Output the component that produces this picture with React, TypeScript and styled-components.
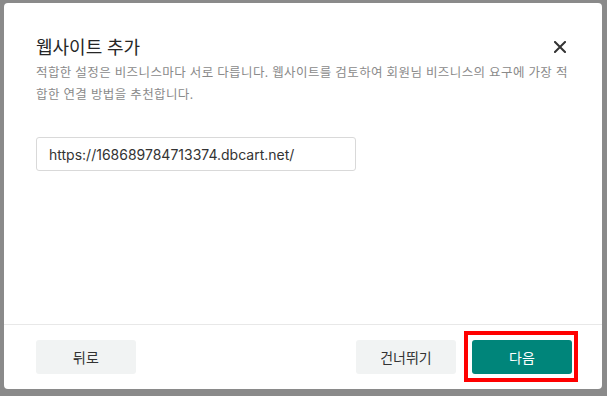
import React, { useState } from "react";
import styled, { createGlobalStyle } from "styled-components";

const GlobalStyle = createGlobalStyle`
  html, body {
    margin: 0;
    padding: 0;
    background: #8a8a8a;
  }
  body {
    font-family: "Noto Sans", "Noto Sans CJK KR", sans-serif;
    width: 607px;
    height: 396px;
    overflow: hidden;
  }
`;

const Backdrop = styled.div`
  width: 607px;
  height: 396px;
  padding: 3px 5px 7px 4px;
  box-sizing: border-box;
`;

const Modal = styled.div`
  width: 598px;
  height: 386px;
  background: #ffffff;
  border-radius: 4px;
  display: flex;
  flex-direction: column;
  box-sizing: border-box;
`;

const Body = styled.div`
  flex: 1;
  padding: 32px 32px 0 32px;
`;

const Header = styled.div`
  display: flex;
  align-items: center;
  justify-content: space-between;
`;

const Title = styled.h2`
  margin: 0;
  font-size: 18px;
  line-height: 24px;
  font-weight: 400;
  color: #262626;
`;

const CloseButton = styled.button`
  border: none;
  background: none;
  padding: 0;
  margin-right: 4px;
  width: 12px;
  height: 12px;
  display: flex;
  cursor: pointer;
`;

const Description = styled.p`
  margin: 3px 0 0 0;
  font-size: 12.5px;
  line-height: 22px;
  color: #8a8a8a;
  letter-spacing: 0.4px;
  word-break: break-all;
`;

const UrlInput = styled.input`
  margin-top: 31px;
  width: 320px;
  height: 34px;
  box-sizing: border-box;
  border: 1px solid #d9d9d9;
  border-radius: 3px;
  padding: 0 12px;
  font-family: "Inter", "Noto Sans", sans-serif;
  font-size: 14px;
  color: #333;
  outline: none;
`;

const Footer = styled.div`
  border-top: 1px solid #e8e8e8;
  padding: 15px 30px 15px 32px;
  display: flex;
  align-items: center;
  gap: 16px;
`;

const Spacer = styled.div`
  flex: 1;
`;

const Button = styled.button<{ $primary?: boolean }>`
  position: relative;
  width: 100px;
  height: 34px;
  border: none;
  border-radius: 3px;
  font-family: "Noto Sans", "Noto Sans CJK KR", sans-serif;
  font-size: 14px;
  cursor: pointer;
  background: ${(p) => (p.$primary ? "#00857a" : "#f1f3f3")};
  color: ${(p) => (p.$primary ? "#ffffff" : "#333333")};
`;

const Highlight = styled.span`
  position: absolute;
  top: -9px;
  left: -8px;
  right: -6px;
  bottom: -8px;
  border: 4px solid #ff0000;
  pointer-events: none;
`;

export default function App() {
  const [url, setUrl] = useState("https://168689784713374.dbcart.net/");

  return (
    <>
      <GlobalStyle />
      <Backdrop>
        <Modal>
          <Body>
            <Header>
              <Title>웹사이트 추가</Title>
              <CloseButton aria-label="닫기">
                <svg width="12" height="12" viewBox="0 0 12 12">
                  <path
                    d="M1 1L11 11M11 1L1 11"
                    stroke="#333"
                    strokeWidth="2"
                    strokeLinecap="square"
                  />
                </svg>
              </CloseButton>
            </Header>
            <Description>
              적합한 설정은 비즈니스마다 서로 다릅니다. 웹사이트를 검토하여 회원님 비즈니스의 요구에 가장 적합한 연결 방법을 추천합니다.
            </Description>
            <UrlInput value={url} onChange={(e) => setUrl(e.target.value)} />
          </Body>
          <Footer>
            <Button>뒤로</Button>
            <Spacer />
            <Button>건너뛰기</Button>
            <Button $primary>
              다음
              <Highlight />
            </Button>
          </Footer>
        </Modal>
      </Backdrop>
    </>
  );
}
